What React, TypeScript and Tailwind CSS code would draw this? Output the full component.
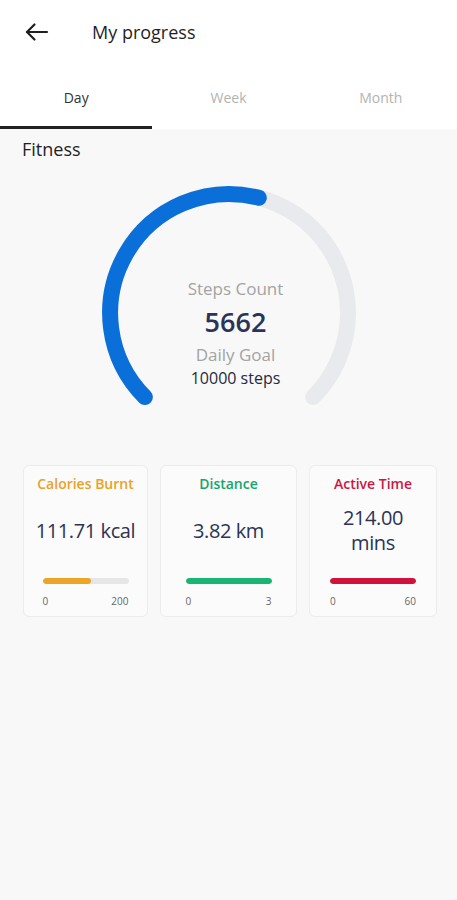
import React from 'react';

const font = { fontFamily: '"Open Sans", "Noto Sans", sans-serif' };

const stats = [
  { title: 'Calories Burnt', value: ['111.71 kcal'], max: 200, pct: 111.71 / 200, color: 'text-[#e9a228]', bar: 'bg-[#eda528]', width: 'w-[125px]' },
  { title: 'Distance', value: ['3.82 km'], max: 3, pct: 1, color: 'text-[#14a56c]', bar: 'bg-[#19b575]', width: 'w-[137px]' },
  { title: 'Active Time', value: ['214.00', 'mins'], max: 60, pct: 1, color: 'text-[#c8183f]', bar: 'bg-[#d0123e]', width: 'w-[128px]' },
];

function Gauge() {
  // centre 130,130 r=119, 270deg sweep from bottom-left
  return (
    <div className="relative mx-auto w-[260px] h-[230px]">
      <svg width="260" height="230" viewBox="0 0 260 230">
        <path d="M 45.9 214.1 A 119 119 0 1 1 214.1 214.1" fill="none" stroke="#e8eaed" strokeWidth="16" strokeLinecap="round" />
        <path d="M 45.9 214.1 A 119 119 0 0 1 159.8 14.8" fill="none" stroke="#0b6fda" strokeWidth="16" strokeLinecap="round" />
      </svg>
      <div className="absolute inset-0 flex flex-col items-center pt-[94px] pl-[14px]">
        <div className="text-[17px] leading-[23px] text-[#a3a3a3]">Steps Count</div>
        <div className="mt-[6px] text-[27px] leading-[32px] font-semibold text-[#2c3354]">5662</div>
        <div className="mt-[5px] text-[17px] leading-[23px] text-[#a3a3a3]">Daily Goal</div>
        <div className="mt-[1px] text-[16px] leading-[22px] font-medium text-[#262a40]">10000 steps</div>
      </div>
    </div>
  );
}

export default function App() {
  return (
    <div className="w-[457px] h-[900px] bg-[#f8f8f8] flex flex-col" style={font}>
      <div className="bg-white">
        <div className="h-16 flex items-center">
          <svg className="ml-[25px]" width="24" height="20" viewBox="0 0 24 20" fill="none" stroke="#1f1f1f" strokeWidth="2.2" strokeLinecap="round" strokeLinejoin="round">
            <path d="M22 10H2" />
            <path d="M9.5 2.5L2 10l7.5 7.5" />
          </svg>
          <div className="ml-[43px] text-[18px] font-medium text-[#1f1f1f]">My progress</div>
        </div>
        <div className="grid grid-cols-3 h-[65px]">
          {['Day', 'Week', 'Month'].map((t, i) => (
            <div key={t} className={`flex items-center justify-center text-[14px] font-medium pt-[5px] ${i === 0 ? 'text-[#333] border-b-[3px] border-[#222]' : 'text-[#b3b3b3] border-b-[3px] border-transparent'}`}>
              {t}
            </div>
          ))}
        </div>
      </div>

      <div className="pl-[22px] mt-[8px] text-[18px] leading-[24px] font-medium text-[#1f1f1f]">Fitness</div>

      <div className="mt-[22px]">
        <Gauge />
      </div>

      <div className="mt-[52px] pl-[23px] flex gap-3">
        {stats.map(s => (
          <div key={s.title} className={`${s.width} h-[152px] rounded-md border border-[#ececec] bg-[#fbfbfb] flex flex-col items-center`}>
            <div className={`h-[36px] leading-[36px] text-[14px] font-semibold ${s.color}`}>{s.title}</div>
            <div className="h-[56px] flex flex-col items-center justify-center text-[20px] leading-[25px] font-medium tracking-[-0.02em] text-[#2c3354]">
              {s.value.map(v => <div key={v}>{v}</div>)}
            </div>
            <div className="mt-[20px] w-[86px] h-[6px] rounded-full bg-[#e6e6e6] overflow-hidden">
              <div className={`h-full rounded-full ${s.bar}`} style={{ width: `${Math.min(s.pct, 1) * 100}%` }} />
            </div>
            <div className="mt-[10px] w-[86px] flex justify-between text-[10px] leading-[14px] text-[#666]">
              <span>0</span>
              <span>{s.max}</span>
            </div>
          </div>
        ))}
      </div>
    </div>
  );
}
